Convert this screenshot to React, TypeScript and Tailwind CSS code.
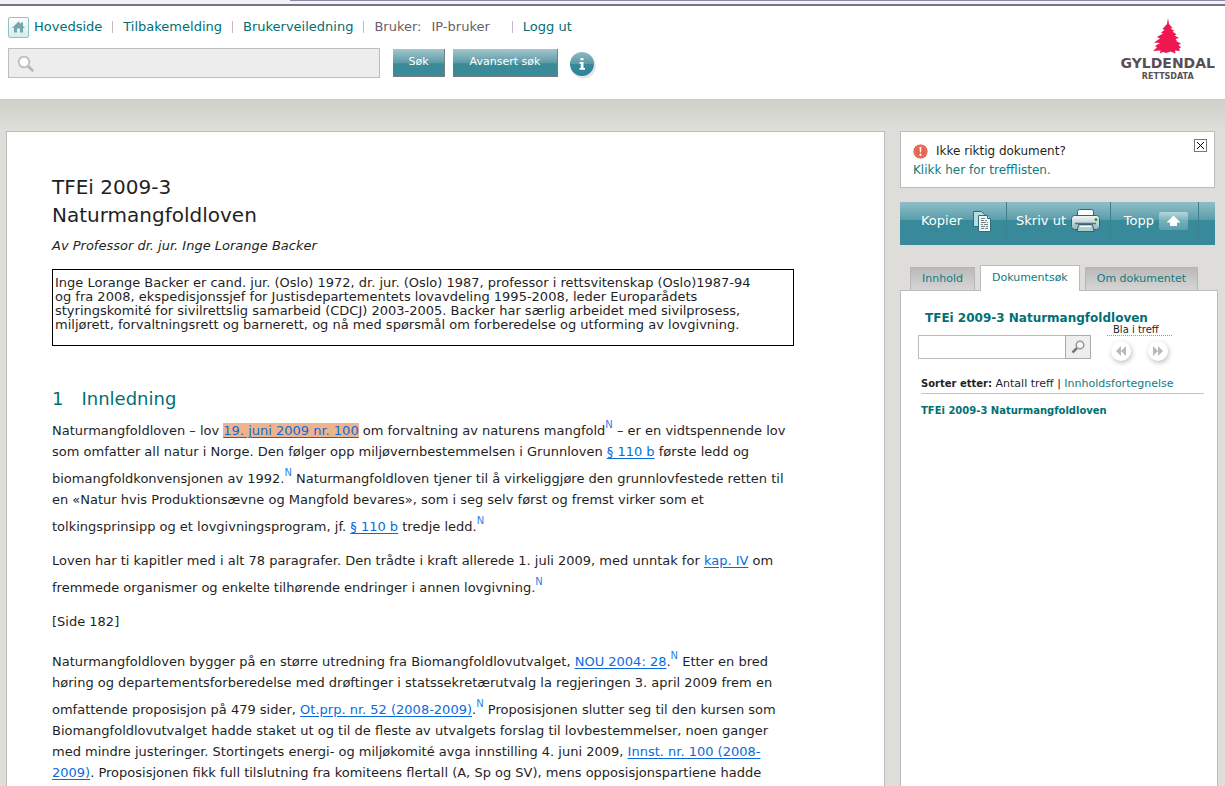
import type { ReactNode } from 'react'

const tabs = [
  { label: 'Innhold', active: false },
  { label: 'Dokumentsøk', active: true },
  { label: 'Om dokumentet', active: false },
]

function Separator() {
  return <span className="h-3 w-px bg-[#cdb4c6]" />
}

function NavLink({ children }: { children: ReactNode }) {
  return (
    <a href="#" className="text-[#006e72]">
      {children}
    </a>
  )
}

function Ref({ children }: { children: ReactNode }) {
  return (
    <a href="#" className="text-[#0a6cdc] underline underline-offset-2">
      {children}
    </a>
  )
}

function Note() {
  return (
    <sup className="static align-[7px] text-[10px] leading-[21px]">
      <a href="#" className="text-[#2f80e4]">
        N
      </a>
    </sup>
  )
}

function HomeIcon() {
  return (
    <svg width="21" height="21" viewBox="0 0 21 21" aria-hidden="true">
      <defs>
        <linearGradient id="home" x1="0" y1="0" x2="0" y2="1">
          <stop offset="0" stopColor="#fff" />
          <stop offset="1" stopColor="#d5e9ea" />
        </linearGradient>
      </defs>
      <rect x=".5" y=".5" width="20" height="20" rx="1.5" fill="url(#home)" stroke="#8cc4c7" />
      <path d="M10.500 4.500 13 7V5.500h2V9l2 2h-2v4.500h-3V11.500H9v4H6V11H4z" fill="#75a6a9" />
    </svg>
  )
}

function InfoIcon() {
  return (
    <svg width="28" height="28" viewBox="0 0 28 28" aria-hidden="true">
      <defs>
        <linearGradient id="info" x1="0" y1="0" x2="0" y2="1">
          <stop offset="0" stopColor="#8dbac3" />
          <stop offset=".48" stopColor="#5a9ba8" />
          <stop offset=".5" stopColor="#378a9b" />
          <stop offset="1" stopColor="#2b8498" />
        </linearGradient>
      </defs>
      <circle cx="14.500" cy="15" r="12.500" fill="#e6e6e6" />
      <circle cx="13" cy="13" r="12" fill="url(#info)" />
      <path d="M11.500 7h3v2.200h-3zM10.500 11h4v6h1.500v1.800h-5.500V17h1.300v-4.200h-1.300z" fill="#fff" />
    </svg>
  )
}

function Logo() {
  return (
    <a href="#" className="flex flex-col items-center font-bold text-[#594f54]">
      <svg width="30" height="36" viewBox="0 0 30 36" aria-hidden="true">
        <path
          d="M15 0l1 6 3.500 4-2 .5 4 2.500-2 .5 4 3-2 1 4.500 2.500-3.500 1 1.500 1.500-1 .5 5 2.500-2.500 1.500 2.500 2.500-2 1 1 2.500-5-.5.500 3-5-2-4.500 1.500-3-1-3 1.500.5-3-7.500.5 4-3.500-2-1.500 5-3-6-.5 6-4-3-1.500 6-3.500-2-1 3.500-2.500-2-1L14 6z"
          fill="#ee1751"
        />
      </svg>
      <span className="mt-px text-sm leading-[17px]">GYLDENDAL</span>
      <span className="text-[8px] leading-[10px]">RETTSDATA</span>
    </a>
  )
}

function AlertIcon() {
  return (
    <svg width="15" height="15" viewBox="0 0 15 15" aria-hidden="true">
      <circle cx="7.500" cy="7.500" r="7" fill="#d5452f" />
      <circle cx="7.500" cy="7.500" r="5.800" fill="#e5634f" stroke="#f2aa9d" strokeWidth=".6" />
      <path d="M6.500 3h2l-.4 5.500h-1.200zM6.500 9.800h2v2h-2z" fill="#fff" />
    </svg>
  )
}

function CopyIcon() {
  return (
    <svg width="18" height="21" viewBox="0 0 18 21" aria-hidden="true">
      <path d="M.5.500h8l3 3v12H.5z" fill="#b9dade" stroke="#2d6f7d" />
      <path d="M5.500 4.500h9l3 3v13h-12z" fill="#f1f5f5" stroke="#2d6f7d" />
      <path d="M14.500 4.500v3h3" fill="#b9dade" stroke="#2d6f7d" />
      <path d="M8 7.500h4M8 9.500h3m1 0h2M8 11.500h5m1 0h1M8 13.500h2m1 0h4M8 15.500h4m1 0h2M8 17.500h3m1 0h3" stroke="#6e8388" />
    </svg>
  )
}

function PrintIcon() {
  return (
    <svg width="29" height="24" viewBox="0 0 29 24" aria-hidden="true">
      <defs>
        <linearGradient id="print" x1="0" y1="0" x2="0" y2="1">
          <stop offset="0" stopColor="#f5f8f8" />
          <stop offset="1" stopColor="#8fb4bb" />
        </linearGradient>
      </defs>
      <path d="M6.500 7.500v-5q0-2 2-2h12q2 0 2 2v5z" fill="#fbfcfc" stroke="#37636e" />
      <rect x=".5" y="6.500" width="28" height="14" rx="3" fill="url(#print)" stroke="#37636e" />
      <path d="M4 14.500h21" stroke="#52767f" strokeWidth="1.500" />
      <path d="M7.500 15.500h14l1.500 7H6z" fill="#b3ced3" stroke="#37636e" />
      <path d="M9 17.500h11" stroke="#fff" />
      <circle cx="25" cy="10.500" r="1.500" fill="#13a538" />
    </svg>
  )
}

function TopIcon() {
  return (
    <svg width="29" height="18" viewBox="0 0 29 18" aria-hidden="true">
      <defs>
        <linearGradient id="top" x1="0" y1="0" x2="0" y2="1">
          <stop offset="0" stopColor="#b8d7dc" />
          <stop offset=".5" stopColor="#75afba" />
          <stop offset="1" stopColor="#5a9fac" />
        </linearGradient>
      </defs>
      <rect width="29" height="18" rx="2" fill="url(#top)" />
      <path d="M14.500 3.500 21.500 10.500H18V14h-7v-3.500H7.500z" fill="#fff" />
    </svg>
  )
}

function SkipIcon({ back = false }: { back?: boolean }) {
  return (
    <svg width="12" height="10" viewBox="0 0 12 10" aria-hidden="true">
      <path d={back ? 'M6 0v10L1 5zM11 0v10L6 5z' : 'M1 0v10l5-5zM6 0v10l5-5z'} fill="#b9b9b9" />
    </svg>
  )
}

function Header() {
  return (
    <header className="flex h-[93px] shrink-0 items-start justify-between bg-white pr-[10px] pl-2">
      <div className="pt-[11px]">
        <nav className="flex h-5 items-center gap-[10px] text-[13px] whitespace-nowrap text-[#6b6066]">
          <a href="#" className="flex items-center gap-[5px] text-[#006e72]">
            <HomeIcon />
            Hovedside
          </a>
          <Separator />
          <NavLink>Tilbakemelding</NavLink>
          <Separator />
          <NavLink>Brukerveiledning</NavLink>
          <Separator />
          <span>Bruker:</span>
          <span className="mr-3">IP-bruker</span>
          <Separator />
          <NavLink>Logg ut</NavLink>
        </nav>

        <form className="mt-[10px] flex items-center" onSubmit={(e) => e.preventDefault()}>
          <div className="relative">
            <input
              aria-label="Søk"
              className="block h-[30px] w-[372px] border border-[#bdbdbd] bg-[#ededed] pl-8 text-[13px] outline-none"
            />
            <svg
              className="pointer-events-none absolute top-2 left-[9px]"
              width="18"
              height="18"
              viewBox="0 0 18 18"
              aria-hidden="true"
            >
              <path d="M11 10l4.500 4.500" stroke="#b5b5b5" strokeWidth="2.500" strokeLinecap="round" />
              <circle cx="7" cy="6" r="5.300" fill="#fff" stroke="#c2c2c2" strokeWidth="2" />
            </svg>
          </div>
          <button className="ml-[13px] h-7 w-[52px] border-r border-b border-[#7b7b83] bg-linear-to-b from-[#a3c6cd] from-0% via-[#5c9ca8] via-50% to-[#3a8b98] to-55% text-[11px] text-white">
            Søk
          </button>
          <button className="ml-2 h-7 w-[105px] border-r border-b border-[#7b7b83] bg-linear-to-b from-[#a3c6cd] from-0% via-[#5c9ca8] via-50% to-[#3a8b98] to-55% text-[11px] text-white">
            Avansert søk
          </button>
          <button className="mt-1 ml-[11px]" type="button" aria-label="Informasjon">
            <InfoIcon />
          </button>
        </form>
      </div>
      <div className="pt-3">
        <Logo />
      </div>
    </header>
  )
}

function Article() {
  return (
    <article className="min-w-0 flex-1 border border-b-0 border-[#bcbcbc] bg-white px-[45px] pt-[41px] text-[13px] leading-[21px] text-[#1f1f1f]">
      <div className="max-w-[742px] whitespace-nowrap">
        <h1 className="text-xl leading-7">
          TFEi 2009-3
          <br />
          Naturmangfoldloven
        </h1>
        <p className="mt-[6px] italic">Av Professor dr. jur. Inge Lorange Backer</p>

        <div className="mt-[13px] border border-black px-[2px] pt-[6px] pb-[13px] leading-[14px]">
          Inge Lorange Backer er cand. jur. (Oslo) 1972, dr. jur. (Oslo) 1987, professor i rettsvitenskap (Oslo)1987-94
          <br />
          og fra 2008, ekspedisjonssjef for Justisdepartementets lovavdeling 1995-2008, leder Europarådets
          <br />
          styringskomité for sivilrettslig samarbeid (CDCJ) 2003-2005. Backer har særlig arbeidet med sivilprosess,
          <br />
          miljørett, forvaltningsrett og barnerett, og nå med spørsmål om forberedelse og utforming av lovgivning.
        </div>

        <h2 className="mt-[39px] flex gap-[18px] text-lg leading-7 text-[#007074]">
          <span>1</span>
          <span>Innledning</span>
        </h2>

        <div className="mt-[1px] space-y-[13px]">
          <p>
            Naturmangfoldloven – lov{' '}
            <span className="bg-[#efb38c]">
              <Ref>19. juni 2009 nr. 100</Ref>
            </span>{' '}
            om forvaltning av naturens mangfold
            <Note /> – er en vidtspennende lov
            <br />
            som omfatter all natur i Norge. Den følger opp miljøvernbestemmelsen i Grunnloven <Ref>§ 110 b</Ref> første ledd og
            <br />
            biomangfoldkonvensjonen av 1992.
            <Note /> Naturmangfoldloven tjener til å virkeliggjøre den grunnlovfestede retten til
            <br />
            en «Natur hvis Produktionsævne og Mangfold bevares», som i seg selv først og fremst virker som et
            <br />
            tolkingsprinsipp og et lovgivningsprogram, jf. <Ref>§ 110 b</Ref> tredje ledd.
            <Note />
          </p>
          <p>
            Loven har ti kapitler med i alt 78 paragrafer. Den trådte i kraft allerede 1. juli 2009, med unntak for{' '}
            <Ref>kap. IV</Ref> om
            <br />
            fremmede organismer og enkelte tilhørende endringer i annen lovgivning.
            <Note />
          </p>
          <p>[Side 182]</p>
          <p>
            Naturmangfoldloven bygger på en større utredning fra Biomangfoldlovutvalget, <Ref>NOU 2004: 28</Ref>.
            <Note /> Etter en bred
            <br />
            høring og departementsforberedelse med drøftinger i statssekretærutvalg la regjeringen 3. april 2009 frem en
            <br />
            omfattende proposisjon på 479 sider, <Ref>Ot.prp. nr. 52 (2008-2009)</Ref>.
            <Note /> Proposisjonen slutter seg til den kursen som
            <br />
            Biomangfoldlovutvalget hadde staket ut og til de fleste av utvalgets forslag til lovbestemmelser, noen ganger
            <br />
            med mindre justeringer. Stortingets energi- og miljøkomité avga innstilling 4. juni 2009,{' '}
            <Ref>
              Innst. nr. 100 (2008-
              <br />
              2009)
            </Ref>
            . Proposisjonen fikk full tilslutning fra komiteens flertall (A, Sp og SV), mens opposisjonspartiene hadde
          </p>
        </div>
      </div>
    </article>
  )
}

function Notice() {
  return (
    <section className="mr-[3px] flex h-[57px] items-start justify-between border border-[#bcbcbc] bg-white pt-[7px] pr-[7px] pl-3 text-xs leading-[19px]">
      <div className="pt-[3px]">
        <p className="flex items-center gap-2 text-[#1f1f1f]">
          <AlertIcon />
          Ikke riktig dokument?
        </p>
        <a href="#" className="block text-[#0e7b80]">
          Klikk her for trefflisten.
        </a>
      </div>
      <button aria-label="Lukk" className="flex size-[13px] items-center justify-center border border-[#777]">
        <svg width="7" height="7" viewBox="0 0 7 7" aria-hidden="true">
          <path d="M0 0l7 7M7 0L0 7" stroke="#000" />
        </svg>
      </button>
    </section>
  )
}

function Toolbar() {
  return (
    <div className="mt-[14px] mr-[3px] flex h-[43px] bg-linear-to-b from-[#8fbec7] from-0% via-[#5a9eaa] via-41% to-[#388a9a] to-43% text-[13px] text-white">
      <button className="flex h-[38px] w-[107px] items-center justify-end gap-[11px] border-r border-[#3b8291] pr-[15px]">
        Kopier
        <CopyIcon />
      </button>
      <button className="flex h-[38px] w-[104px] items-center justify-end gap-[5px] border-r border-[#3b8291] pr-[10px]">
        Skriv ut
        <PrintIcon />
      </button>
      <button className="flex h-[38px] w-[88px] items-center justify-end gap-[5px] border-r border-[#3b8291] pr-[10px]">
        Topp
        <TopIcon />
      </button>
    </div>
  )
}

function SearchPanel() {
  return (
    <section className="flex flex-1 flex-col pt-5">
      <div className="flex items-end gap-[5px] pl-[10px] text-[11px]" role="tablist">
        {tabs.map((tab) => (
          <button
            key={tab.label}
            role="tab"
            aria-selected={tab.active}
            className={
              tab.active
                ? 'relative -mb-px h-[26px] border border-b-0 border-[#bcbcbc] bg-white px-[11px] text-[#0e7b80]'
                : 'h-[23px] border border-b-0 border-[#b5b5b5] bg-linear-to-b from-[#b9b9b9] to-[#d6d6d6] px-[11px] text-[#0e7b80]'
            }
          >
            {tab.label}
          </button>
        ))}
      </div>

      <div className="flex-1 border border-b-0 border-[#bcbcbc] bg-white pt-5 pr-[13px] pl-[17px] text-[11px] text-[#1f1f1f]">
        <h3 className="pl-[7px] text-xs leading-[14px] font-bold whitespace-nowrap text-[#007074]">
          TFEi 2009-3 Naturmangfoldloven
        </h3>
        <div className="flex items-start">
          <form className="mt-[10px] flex" onSubmit={(e) => e.preventDefault()}>
            <input
              aria-label="Søk i dokumentet"
              className="h-6 w-[148px] border border-[#bcbcbc] bg-white px-1 text-[11px] outline-none"
            />
            <button
              aria-label="Søk i dokumentet"
              className="-ml-px flex h-6 w-[26px] items-center justify-center border border-[#ababab] bg-[#eeeeee]"
            >
              <svg width="14" height="14" viewBox="0 0 14 14" aria-hidden="true">
                <path d="M1.500 12.500 6 8" stroke="#777" strokeWidth="2.500" />
                <circle cx="9" cy="5" r="3.800" fill="#f8f8f8" stroke="#999" strokeWidth="1.500" />
              </svg>
            </button>
          </form>
          <div className="ml-4 w-[65px]">
            <p className="border-b border-dotted border-[#999] pl-[6px] text-[10px] leading-[10px] whitespace-nowrap">
              Bla i treff
            </p>
            <div className="mt-[5px] flex justify-between px-1">
              <button
                aria-label="Forrige treff"
                className="flex size-5 items-center justify-center rounded-full bg-white shadow-[1px_2px_5px_rgba(0,0,0,0.25)]"
              >
                <SkipIcon back />
              </button>
              <button
                aria-label="Neste treff"
                className="flex size-5 items-center justify-center rounded-full bg-white shadow-[1px_2px_5px_rgba(0,0,0,0.25)]"
              >
                <SkipIcon />
              </button>
            </div>
          </div>
        </div>

        <div className="mt-4 ml-[3px] border-b border-[#c4c4c4] pb-[2px] leading-[14px] whitespace-nowrap">
          <b className="text-[10px]">Sorter etter:</b> Antall treff |{' '}
          <a href="#" className="text-[#0e7b80]">
            Innholdsfortegnelse
          </a>
        </div>
        <a href="#" className="mt-[10px] ml-[3px] block text-[10px] leading-[14px] font-bold text-[#007074]">
          TFEi 2009-3 Naturmangfoldloven
        </a>
      </div>
    </section>
  )
}

export default function App() {
  return (
    <div className="flex min-h-screen flex-col bg-[#deddd9] font-[Verdana,'DejaVu_Sans',sans-serif]">
      <div className="flex h-[6px] shrink-0 flex-col justify-between border-b-2 border-[#77777b] bg-[#f0f2fa]">
        <div className="ml-[290px] h-px bg-[#8c8ca4]" />
      </div>
      <Header />
      <div className="h-8 shrink-0 bg-linear-to-b from-[#d0d0cb] to-[#e0dfda]" />
      <main className="flex flex-1 gap-[15px] pr-[7px] pl-[6px]">
        <Article />
        <aside className="flex w-[318px] shrink-0 flex-col">
          <Notice />
          <Toolbar />
          <SearchPanel />
        </aside>
      </main>
    </div>
  )
}
